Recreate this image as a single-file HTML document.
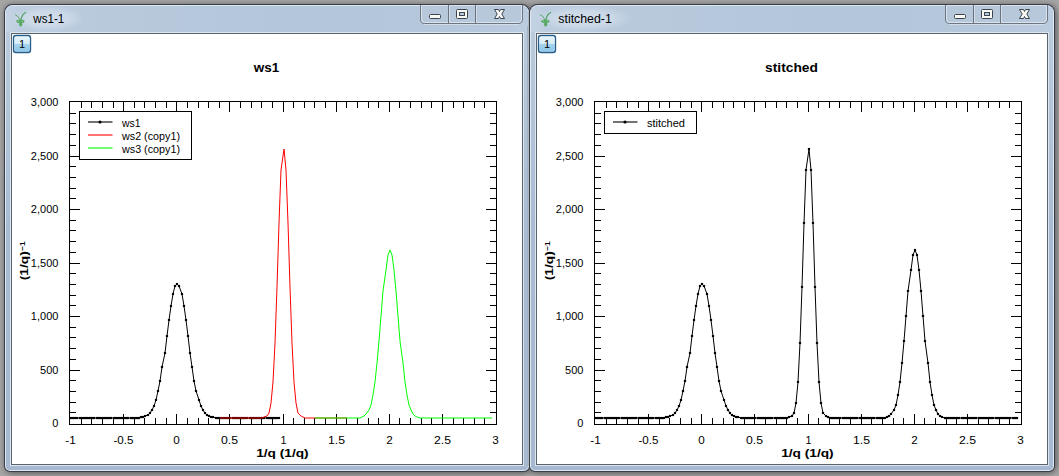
<!DOCTYPE html>
<html><head><meta charset="utf-8"><title>MantidPlot</title>
<style>html,body{margin:0;padding:0;width:1059px;height:476px;overflow:hidden;background:#a6a6a6}svg{display:block}</style>
</head><body><svg width="1059" height="476" viewBox="0 0 1059 476"><defs>
<linearGradient id="frameGrad" x1="0" y1="0" x2="0" y2="1">
<stop offset="0" stop-color="#bccddf"/><stop offset="0.5" stop-color="#a9bbd2"/><stop offset="1" stop-color="#a6b9d0"/></linearGradient>
<linearGradient id="titleGrad" x1="0" y1="0" x2="1" y2="0">
<stop offset="0" stop-color="#c4d3e3"/><stop offset="0.03" stop-color="#bccde0"/><stop offset="0.2" stop-color="#b8c9dc"/><stop offset="0.6" stop-color="#b3c6da"/><stop offset="0.85" stop-color="#b5c7db"/><stop offset="1" stop-color="#bccce0"/></linearGradient>
<radialGradient id="glow" cx="0.5" cy="0.5" r="0.5"><stop offset="0" stop-color="#dde7f1" stop-opacity="0.7"/><stop offset="0.55" stop-color="#dde7f1" stop-opacity="0.5"/><stop offset="1" stop-color="#dde7f1" stop-opacity="0"/></radialGradient>
<linearGradient id="btnGrad" x1="0" y1="0" x2="0" y2="1">
<stop offset="0" stop-color="#eaf6fc"/><stop offset="0.47" stop-color="#d6ecf8"/><stop offset="0.5" stop-color="#a4d3ee"/><stop offset="1" stop-color="#8ec5e8"/></linearGradient>
<clipPath id="clip0"><rect x="70" y="102" width="426" height="322"/></clipPath>
<clipPath id="clip525"><rect x="595" y="102" width="426" height="322"/></clipPath>
<filter id="shadow" x="-5%" y="-5%" width="110%" height="110%"><feGaussianBlur stdDeviation="3"/></filter>
<linearGradient id="bgTop" x1="0" y1="0" x2="0" y2="1"><stop offset="0" stop-color="#a3a3a3"/><stop offset="1" stop-color="#808080"/></linearGradient>
</defs><rect x="0" y="0" width="1059" height="476" fill="#a6a6a6"/><g opacity="0.5" filter="url(#shadow)"><rect x="5" y="5" width="526" height="468" rx="7" fill="#000"/><rect x="530" y="5" width="526" height="468" rx="7" fill="#000"/></g><path d="M4 12.5 A8.5 8.5 0 0 1 12.5 4 H521.5 A8.5 8.5 0 0 1 530 12.5 V466 A6 6 0 0 1 524 472 H10 A6 6 0 0 1 4 466 Z" fill="#363e4a"/><path d="M5 12.5 A7.5 7.5 0 0 1 12.5 5 H521.5 A7.5 7.5 0 0 1 529 12.5 V466 A5 5 0 0 1 524 471 H10 A5 5 0 0 1 5 466 Z" fill="#dfe7f1"/><path d="M6 12.5 A6.5 6.5 0 0 1 12.5 6 H521.5 A6.5 6.5 0 0 1 528 12.5 V466 A4 4 0 0 1 524 470 H10 A4 4 0 0 1 6 466 Z" fill="url(#frameGrad)"/><path d="M6 32 V12.5 A6.5 6.5 0 0 1 12.5 6 H521.5 A6.5 6.5 0 0 1 528 12.5 V32 Z" fill="url(#titleGrad)"/><ellipse cx="47.5" cy="18.5" rx="37.5" ry="13" fill="url(#glow)"/><rect x="10" y="32" width="514" height="434" fill="#dde5ef"/><rect x="11" y="33" width="512" height="432" fill="#58636e"/><rect x="12" y="34" width="510" height="430" fill="#ffffff"/><g transform="translate(0,0)" stroke-linecap="round"><path d="M25.7 12.5 Q21.9 14.2 21.0 19.8" fill="none" stroke="#45a055" stroke-width="1.1"/><path d="M15.3 14.7 Q18.8 15.7 19.8 19.8" fill="none" stroke="#5aa866" stroke-width="0.95"/><ellipse cx="20.4" cy="21.3" rx="4.2" ry="1.9" fill="#5aa866"/><ellipse cx="20.7" cy="24.3" rx="1.6" ry="2.3" fill="#5aa966"/><circle cx="18.4" cy="21.2" r="0.75" fill="#93c99c"/><circle cx="22.4" cy="21.2" r="0.75" fill="#93c99c"/></g><text x="33.3" y="23" font-family='"Liberation Sans", sans-serif' font-size="12" fill="#000" textLength="31" lengthAdjust="spacingAndGlyphs">ws1-1</text><path d="M420.5 5 V19 Q420.5 23.5 424.5 23.5 H518 Q522.5 23.5 522.5 19 V5" fill="#b7c8db" stroke="#6c7680"/><path d="M421.5 5.5 V19 Q421.5 22.5 424.5 22.5 H518 Q521.5 22.5 521.5 19 V5.5 Z" fill="none" stroke="#e2eaf3" stroke-opacity="0.8"/><path d="M424 24.5 H519" stroke="#dfe7f0" stroke-opacity="0.7"/><rect x="448" y="5" width="1" height="18" fill="#6a747e"/><rect x="449" y="5" width="1" height="18" fill="#dde6ef" opacity="0.7"/><rect x="475" y="5" width="1" height="18" fill="#6a747e"/><rect x="476" y="5" width="1" height="18" fill="#dde6ef" opacity="0.7"/><rect x="429.5" y="14.5" width="11" height="4" rx="1" fill="#f8f8f4" stroke="#3c4450"/><rect x="456.5" y="9.5" width="11" height="9" rx="1" fill="#f8f8f4" stroke="#3c4450"/><rect x="459.5" y="12.5" width="5" height="3" fill="#b7c8db" stroke="#3c4450"/><path transform="translate(0,0)" d="M494.5 9.5 H498.5 L499.5 11.5 L500.5 9.5 H504.5 L501.8 14 L504.5 18.5 H500.5 L499.5 16.5 L498.5 18.5 H494.5 L497.2 14 Z" fill="#f7f7f3" stroke="#3c4450" stroke-linejoin="round"/><rect x="13.5" y="35.5" width="17" height="17" rx="2.5" fill="url(#btnGrad)" stroke="#265f8c" stroke-width="1.35"/><rect x="14.6" y="36.6" width="14.8" height="14.8" rx="1.5" fill="none" stroke="#ffffff" stroke-opacity="0.3" stroke-width="0.8"/><text x="22" y="48" font-family='"Liberation Sans", sans-serif' font-size="11" fill="#000" text-anchor="middle">1</text><text x="266.5" y="72" font-family='"Liberation Sans", sans-serif' font-size="13" font-weight="bold" fill="#000" text-anchor="middle" textLength="25.5" lengthAdjust="spacingAndGlyphs">ws1</text><path d="M81 102h1v6h-1zM81 418h1v6h-1zM91 102h1v6h-1zM91 418h1v6h-1zM102 102h1v6h-1zM102 418h1v6h-1zM113 102h1v6h-1zM113 418h1v6h-1zM123 102h1v10h-1zM123 414h1v10h-1zM134 102h1v6h-1zM134 418h1v6h-1zM144 102h1v6h-1zM144 418h1v6h-1zM155 102h1v6h-1zM155 418h1v6h-1zM166 102h1v6h-1zM166 418h1v6h-1zM176 102h1v10h-1zM176 414h1v10h-1zM187 102h1v6h-1zM187 418h1v6h-1zM198 102h1v6h-1zM198 418h1v6h-1zM208 102h1v6h-1zM208 418h1v6h-1zM219 102h1v6h-1zM219 418h1v6h-1zM229 102h1v10h-1zM229 414h1v10h-1zM240 102h1v6h-1zM240 418h1v6h-1zM251 102h1v6h-1zM251 418h1v6h-1zM261 102h1v6h-1zM261 418h1v6h-1zM272 102h1v6h-1zM272 418h1v6h-1zM283 102h1v10h-1zM283 414h1v10h-1zM293 102h1v6h-1zM293 418h1v6h-1zM304 102h1v6h-1zM304 418h1v6h-1zM314 102h1v6h-1zM314 418h1v6h-1zM325 102h1v6h-1zM325 418h1v6h-1zM336 102h1v10h-1zM336 414h1v10h-1zM346 102h1v6h-1zM346 418h1v6h-1zM357 102h1v6h-1zM357 418h1v6h-1zM368 102h1v6h-1zM368 418h1v6h-1zM378 102h1v6h-1zM378 418h1v6h-1zM389 102h1v10h-1zM389 414h1v10h-1zM399 102h1v6h-1zM399 418h1v6h-1zM410 102h1v6h-1zM410 418h1v6h-1zM421 102h1v6h-1zM421 418h1v6h-1zM431 102h1v6h-1zM431 418h1v6h-1zM442 102h1v10h-1zM442 414h1v10h-1zM453 102h1v6h-1zM453 418h1v6h-1zM463 102h1v6h-1zM463 418h1v6h-1zM474 102h1v6h-1zM474 418h1v6h-1zM484 102h1v6h-1zM484 418h1v6h-1zM70 412h6v1h-6zM490 412h6v1h-6zM70 402h6v1h-6zM490 402h6v1h-6zM70 391h6v1h-6zM490 391h6v1h-6zM70 380h6v1h-6zM490 380h6v1h-6zM70 370h10v1h-10zM486 370h10v1h-10zM70 359h6v1h-6zM490 359h6v1h-6zM70 348h6v1h-6zM490 348h6v1h-6zM70 337h6v1h-6zM490 337h6v1h-6zM70 327h6v1h-6zM490 327h6v1h-6zM70 316h10v1h-10zM486 316h10v1h-10zM70 305h6v1h-6zM490 305h6v1h-6zM70 295h6v1h-6zM490 295h6v1h-6zM70 284h6v1h-6zM490 284h6v1h-6zM70 273h6v1h-6zM490 273h6v1h-6zM70 263h10v1h-10zM486 263h10v1h-10zM70 252h6v1h-6zM490 252h6v1h-6zM70 241h6v1h-6zM490 241h6v1h-6zM70 230h6v1h-6zM490 230h6v1h-6zM70 220h6v1h-6zM490 220h6v1h-6zM70 209h10v1h-10zM486 209h10v1h-10zM70 198h6v1h-6zM490 198h6v1h-6zM70 188h6v1h-6zM490 188h6v1h-6zM70 177h6v1h-6zM490 177h6v1h-6zM70 166h6v1h-6zM490 166h6v1h-6zM70 156h10v1h-10zM486 156h10v1h-10zM70 145h6v1h-6zM490 145h6v1h-6zM70 134h6v1h-6zM490 134h6v1h-6zM70 123h6v1h-6zM490 123h6v1h-6zM70 113h6v1h-6zM490 113h6v1h-6z" fill="#000" shape-rendering="crispEdges"/><rect x="69.5" y="101.5" width="427" height="323" fill="none" stroke="#000" shape-rendering="crispEdges"/><g font-family='"Liberation Sans", sans-serif' font-size="11" fill="#000" text-anchor="middle"><text x="70.5" y="444" textLength="10.5" lengthAdjust="spacingAndGlyphs">-1</text><text x="123.5" y="444" textLength="20" lengthAdjust="spacingAndGlyphs">-0.5</text><text x="176.5" y="444" textLength="6.5" lengthAdjust="spacingAndGlyphs">0</text><text x="229.5" y="444" textLength="17" lengthAdjust="spacingAndGlyphs">0.5</text><text x="283.5" y="444" textLength="6" lengthAdjust="spacingAndGlyphs">1</text><text x="336.5" y="444" textLength="17" lengthAdjust="spacingAndGlyphs">1.5</text><text x="389.5" y="444" textLength="6.5" lengthAdjust="spacingAndGlyphs">2</text><text x="442.5" y="444" textLength="17" lengthAdjust="spacingAndGlyphs">2.5</text><text x="495.5" y="444" textLength="6.5" lengthAdjust="spacingAndGlyphs">3</text></g><g font-family='"Liberation Sans", sans-serif' font-size="11" fill="#000" text-anchor="end"><text x="58.4" y="426.8">0</text><text x="58.4" y="373.8">500</text><text x="58.4" y="319.8">1,000</text><text x="58.4" y="266.8">1,500</text><text x="58.4" y="212.8">2,000</text><text x="58.4" y="159.8">2,500</text><text x="58.4" y="105.8">3,000</text></g><text x="282.4" y="456.6" font-family='"Liberation Sans", sans-serif' font-size="11" font-weight="bold" fill="#000" text-anchor="middle" textLength="52.5" lengthAdjust="spacingAndGlyphs">1/q (1/q)</text><g transform="translate(28.1,280.2) rotate(-90)" font-family='"Liberation Sans", sans-serif' font-weight="bold" fill="#000"><text x="0" y="0" font-size="11" textLength="29" lengthAdjust="spacingAndGlyphs">(1/q)</text><text x="29.3" y="-3.2" font-size="7.5" textLength="9.5" lengthAdjust="spacingAndGlyphs">&#8722;1</text></g><g clip-path="url(#clip0)"><polyline points="71,418 73,418 75,418 77,418 80,418 82,418 84,418 86,418 88,418 90,418 92,418 94,418 97,418 99,418 101,418 103,418 105,418 107,418 109,418 111,418 114,418 116,418 118,418 120,418 122,418 124,418 126,418 128,418 131,418 133,418 135,418 137,418 139,418 141,417 143,417 145,416 148,415 150,413 152,410 154,406 156,400 158,391 160,381 162,367 165,353 167,336 169,320 171,306 173,294 175,286 177,284 179,286 182,294 184,306 186,320 188,336 190,353 192,367 194,381 196,391 199,400 201,406 203,410 205,413 207,415 209,416 211,417 213,417 216,418 218,418 220,418 222,418 224,418 226,418 228,418 230,418 233,418 235,418 237,418 239,418 241,418 243,418 245,418 247,418 250,418 252,418 254,418 256,418 258,418 260,418 262,418 264,418 267,418 269,418 271,418 273,418 275,418 277,418 279,418" fill="none" stroke="#000" stroke-width="1.0" stroke-linejoin="round" /><path d="M69.65 418a1.35 1.35 0 1 0 2.7 0a1.35 1.35 0 1 0 -2.7 0zM71.65 418a1.35 1.35 0 1 0 2.7 0a1.35 1.35 0 1 0 -2.7 0zM73.65 418a1.35 1.35 0 1 0 2.7 0a1.35 1.35 0 1 0 -2.7 0zM75.65 418a1.35 1.35 0 1 0 2.7 0a1.35 1.35 0 1 0 -2.7 0zM78.65 418a1.35 1.35 0 1 0 2.7 0a1.35 1.35 0 1 0 -2.7 0zM80.65 418a1.35 1.35 0 1 0 2.7 0a1.35 1.35 0 1 0 -2.7 0zM82.65 418a1.35 1.35 0 1 0 2.7 0a1.35 1.35 0 1 0 -2.7 0zM84.65 418a1.35 1.35 0 1 0 2.7 0a1.35 1.35 0 1 0 -2.7 0zM86.65 418a1.35 1.35 0 1 0 2.7 0a1.35 1.35 0 1 0 -2.7 0zM88.65 418a1.35 1.35 0 1 0 2.7 0a1.35 1.35 0 1 0 -2.7 0zM90.65 418a1.35 1.35 0 1 0 2.7 0a1.35 1.35 0 1 0 -2.7 0zM92.65 418a1.35 1.35 0 1 0 2.7 0a1.35 1.35 0 1 0 -2.7 0zM95.65 418a1.35 1.35 0 1 0 2.7 0a1.35 1.35 0 1 0 -2.7 0zM97.65 418a1.35 1.35 0 1 0 2.7 0a1.35 1.35 0 1 0 -2.7 0zM99.65 418a1.35 1.35 0 1 0 2.7 0a1.35 1.35 0 1 0 -2.7 0zM101.65 418a1.35 1.35 0 1 0 2.7 0a1.35 1.35 0 1 0 -2.7 0zM103.65 418a1.35 1.35 0 1 0 2.7 0a1.35 1.35 0 1 0 -2.7 0zM105.65 418a1.35 1.35 0 1 0 2.7 0a1.35 1.35 0 1 0 -2.7 0zM107.65 418a1.35 1.35 0 1 0 2.7 0a1.35 1.35 0 1 0 -2.7 0zM109.65 418a1.35 1.35 0 1 0 2.7 0a1.35 1.35 0 1 0 -2.7 0zM112.65 418a1.35 1.35 0 1 0 2.7 0a1.35 1.35 0 1 0 -2.7 0zM114.65 418a1.35 1.35 0 1 0 2.7 0a1.35 1.35 0 1 0 -2.7 0zM116.65 418a1.35 1.35 0 1 0 2.7 0a1.35 1.35 0 1 0 -2.7 0zM118.65 418a1.35 1.35 0 1 0 2.7 0a1.35 1.35 0 1 0 -2.7 0zM120.65 418a1.35 1.35 0 1 0 2.7 0a1.35 1.35 0 1 0 -2.7 0zM122.65 418a1.35 1.35 0 1 0 2.7 0a1.35 1.35 0 1 0 -2.7 0zM124.65 418a1.35 1.35 0 1 0 2.7 0a1.35 1.35 0 1 0 -2.7 0zM126.65 418a1.35 1.35 0 1 0 2.7 0a1.35 1.35 0 1 0 -2.7 0zM129.65 418a1.35 1.35 0 1 0 2.7 0a1.35 1.35 0 1 0 -2.7 0zM131.65 418a1.35 1.35 0 1 0 2.7 0a1.35 1.35 0 1 0 -2.7 0zM133.65 418a1.35 1.35 0 1 0 2.7 0a1.35 1.35 0 1 0 -2.7 0zM135.65 418a1.35 1.35 0 1 0 2.7 0a1.35 1.35 0 1 0 -2.7 0zM137.65 418a1.35 1.35 0 1 0 2.7 0a1.35 1.35 0 1 0 -2.7 0zM139.65 417a1.35 1.35 0 1 0 2.7 0a1.35 1.35 0 1 0 -2.7 0zM141.65 417a1.35 1.35 0 1 0 2.7 0a1.35 1.35 0 1 0 -2.7 0zM143.65 416a1.35 1.35 0 1 0 2.7 0a1.35 1.35 0 1 0 -2.7 0zM146.65 415a1.35 1.35 0 1 0 2.7 0a1.35 1.35 0 1 0 -2.7 0zM148.65 413a1.35 1.35 0 1 0 2.7 0a1.35 1.35 0 1 0 -2.7 0zM150.65 410a1.35 1.35 0 1 0 2.7 0a1.35 1.35 0 1 0 -2.7 0zM152.65 406a1.35 1.35 0 1 0 2.7 0a1.35 1.35 0 1 0 -2.7 0zM154.65 400a1.35 1.35 0 1 0 2.7 0a1.35 1.35 0 1 0 -2.7 0zM156.65 391a1.35 1.35 0 1 0 2.7 0a1.35 1.35 0 1 0 -2.7 0zM158.65 381a1.35 1.35 0 1 0 2.7 0a1.35 1.35 0 1 0 -2.7 0zM160.65 367a1.35 1.35 0 1 0 2.7 0a1.35 1.35 0 1 0 -2.7 0zM163.65 353a1.35 1.35 0 1 0 2.7 0a1.35 1.35 0 1 0 -2.7 0zM165.65 336a1.35 1.35 0 1 0 2.7 0a1.35 1.35 0 1 0 -2.7 0zM167.65 320a1.35 1.35 0 1 0 2.7 0a1.35 1.35 0 1 0 -2.7 0zM169.65 306a1.35 1.35 0 1 0 2.7 0a1.35 1.35 0 1 0 -2.7 0zM171.65 294a1.35 1.35 0 1 0 2.7 0a1.35 1.35 0 1 0 -2.7 0zM173.65 286a1.35 1.35 0 1 0 2.7 0a1.35 1.35 0 1 0 -2.7 0zM175.65 284a1.35 1.35 0 1 0 2.7 0a1.35 1.35 0 1 0 -2.7 0zM177.65 286a1.35 1.35 0 1 0 2.7 0a1.35 1.35 0 1 0 -2.7 0zM180.65 294a1.35 1.35 0 1 0 2.7 0a1.35 1.35 0 1 0 -2.7 0zM182.65 306a1.35 1.35 0 1 0 2.7 0a1.35 1.35 0 1 0 -2.7 0zM184.65 320a1.35 1.35 0 1 0 2.7 0a1.35 1.35 0 1 0 -2.7 0zM186.65 336a1.35 1.35 0 1 0 2.7 0a1.35 1.35 0 1 0 -2.7 0zM188.65 353a1.35 1.35 0 1 0 2.7 0a1.35 1.35 0 1 0 -2.7 0zM190.65 367a1.35 1.35 0 1 0 2.7 0a1.35 1.35 0 1 0 -2.7 0zM192.65 381a1.35 1.35 0 1 0 2.7 0a1.35 1.35 0 1 0 -2.7 0zM194.65 391a1.35 1.35 0 1 0 2.7 0a1.35 1.35 0 1 0 -2.7 0zM197.65 400a1.35 1.35 0 1 0 2.7 0a1.35 1.35 0 1 0 -2.7 0zM199.65 406a1.35 1.35 0 1 0 2.7 0a1.35 1.35 0 1 0 -2.7 0zM201.65 410a1.35 1.35 0 1 0 2.7 0a1.35 1.35 0 1 0 -2.7 0zM203.65 413a1.35 1.35 0 1 0 2.7 0a1.35 1.35 0 1 0 -2.7 0zM205.65 415a1.35 1.35 0 1 0 2.7 0a1.35 1.35 0 1 0 -2.7 0zM207.65 416a1.35 1.35 0 1 0 2.7 0a1.35 1.35 0 1 0 -2.7 0zM209.65 417a1.35 1.35 0 1 0 2.7 0a1.35 1.35 0 1 0 -2.7 0zM211.65 417a1.35 1.35 0 1 0 2.7 0a1.35 1.35 0 1 0 -2.7 0zM214.65 418a1.35 1.35 0 1 0 2.7 0a1.35 1.35 0 1 0 -2.7 0zM216.65 418a1.35 1.35 0 1 0 2.7 0a1.35 1.35 0 1 0 -2.7 0zM218.65 418a1.35 1.35 0 1 0 2.7 0a1.35 1.35 0 1 0 -2.7 0zM220.65 418a1.35 1.35 0 1 0 2.7 0a1.35 1.35 0 1 0 -2.7 0zM222.65 418a1.35 1.35 0 1 0 2.7 0a1.35 1.35 0 1 0 -2.7 0zM224.65 418a1.35 1.35 0 1 0 2.7 0a1.35 1.35 0 1 0 -2.7 0zM226.65 418a1.35 1.35 0 1 0 2.7 0a1.35 1.35 0 1 0 -2.7 0zM228.65 418a1.35 1.35 0 1 0 2.7 0a1.35 1.35 0 1 0 -2.7 0zM231.65 418a1.35 1.35 0 1 0 2.7 0a1.35 1.35 0 1 0 -2.7 0zM233.65 418a1.35 1.35 0 1 0 2.7 0a1.35 1.35 0 1 0 -2.7 0zM235.65 418a1.35 1.35 0 1 0 2.7 0a1.35 1.35 0 1 0 -2.7 0zM237.65 418a1.35 1.35 0 1 0 2.7 0a1.35 1.35 0 1 0 -2.7 0zM239.65 418a1.35 1.35 0 1 0 2.7 0a1.35 1.35 0 1 0 -2.7 0zM241.65 418a1.35 1.35 0 1 0 2.7 0a1.35 1.35 0 1 0 -2.7 0zM243.65 418a1.35 1.35 0 1 0 2.7 0a1.35 1.35 0 1 0 -2.7 0zM245.65 418a1.35 1.35 0 1 0 2.7 0a1.35 1.35 0 1 0 -2.7 0zM248.65 418a1.35 1.35 0 1 0 2.7 0a1.35 1.35 0 1 0 -2.7 0zM250.65 418a1.35 1.35 0 1 0 2.7 0a1.35 1.35 0 1 0 -2.7 0zM252.65 418a1.35 1.35 0 1 0 2.7 0a1.35 1.35 0 1 0 -2.7 0zM254.65 418a1.35 1.35 0 1 0 2.7 0a1.35 1.35 0 1 0 -2.7 0zM256.65 418a1.35 1.35 0 1 0 2.7 0a1.35 1.35 0 1 0 -2.7 0zM258.65 418a1.35 1.35 0 1 0 2.7 0a1.35 1.35 0 1 0 -2.7 0zM260.65 418a1.35 1.35 0 1 0 2.7 0a1.35 1.35 0 1 0 -2.7 0zM262.65 418a1.35 1.35 0 1 0 2.7 0a1.35 1.35 0 1 0 -2.7 0zM265.65 418a1.35 1.35 0 1 0 2.7 0a1.35 1.35 0 1 0 -2.7 0zM267.65 418a1.35 1.35 0 1 0 2.7 0a1.35 1.35 0 1 0 -2.7 0zM269.65 418a1.35 1.35 0 1 0 2.7 0a1.35 1.35 0 1 0 -2.7 0zM271.65 418a1.35 1.35 0 1 0 2.7 0a1.35 1.35 0 1 0 -2.7 0zM273.65 418a1.35 1.35 0 1 0 2.7 0a1.35 1.35 0 1 0 -2.7 0zM275.65 418a1.35 1.35 0 1 0 2.7 0a1.35 1.35 0 1 0 -2.7 0zM277.65 418a1.35 1.35 0 1 0 2.7 0a1.35 1.35 0 1 0 -2.7 0z" fill="#000" opacity="0.55"/><path d="M70 417h2v2h-2zM72 417h2v2h-2zM74 417h2v2h-2zM76 417h2v2h-2zM79 417h2v2h-2zM81 417h2v2h-2zM83 417h2v2h-2zM85 417h2v2h-2zM87 417h2v2h-2zM89 417h2v2h-2zM91 417h2v2h-2zM93 417h2v2h-2zM96 417h2v2h-2zM98 417h2v2h-2zM100 417h2v2h-2zM102 417h2v2h-2zM104 417h2v2h-2zM106 417h2v2h-2zM108 417h2v2h-2zM110 417h2v2h-2zM113 417h2v2h-2zM115 417h2v2h-2zM117 417h2v2h-2zM119 417h2v2h-2zM121 417h2v2h-2zM123 417h2v2h-2zM125 417h2v2h-2zM127 417h2v2h-2zM130 417h2v2h-2zM132 417h2v2h-2zM134 417h2v2h-2zM136 417h2v2h-2zM138 417h2v2h-2zM140 416h2v2h-2zM142 416h2v2h-2zM144 415h2v2h-2zM147 414h2v2h-2zM149 412h2v2h-2zM151 409h2v2h-2zM153 405h2v2h-2zM155 399h2v2h-2zM157 390h2v2h-2zM159 380h2v2h-2zM161 366h2v2h-2zM164 352h2v2h-2zM166 335h2v2h-2zM168 319h2v2h-2zM170 305h2v2h-2zM172 293h2v2h-2zM174 285h2v2h-2zM176 283h2v2h-2zM178 285h2v2h-2zM181 293h2v2h-2zM183 305h2v2h-2zM185 319h2v2h-2zM187 335h2v2h-2zM189 352h2v2h-2zM191 366h2v2h-2zM193 380h2v2h-2zM195 390h2v2h-2zM198 399h2v2h-2zM200 405h2v2h-2zM202 409h2v2h-2zM204 412h2v2h-2zM206 414h2v2h-2zM208 415h2v2h-2zM210 416h2v2h-2zM212 416h2v2h-2zM215 417h2v2h-2zM217 417h2v2h-2zM219 417h2v2h-2zM221 417h2v2h-2zM223 417h2v2h-2zM225 417h2v2h-2zM227 417h2v2h-2zM229 417h2v2h-2zM232 417h2v2h-2zM234 417h2v2h-2zM236 417h2v2h-2zM238 417h2v2h-2zM240 417h2v2h-2zM242 417h2v2h-2zM244 417h2v2h-2zM246 417h2v2h-2zM249 417h2v2h-2zM251 417h2v2h-2zM253 417h2v2h-2zM255 417h2v2h-2zM257 417h2v2h-2zM259 417h2v2h-2zM261 417h2v2h-2zM263 417h2v2h-2zM266 417h2v2h-2zM268 417h2v2h-2zM270 417h2v2h-2zM272 417h2v2h-2zM274 417h2v2h-2zM276 417h2v2h-2zM278 417h2v2h-2z" fill="#000" shape-rendering="crispEdges"/><polyline points="220,418 222,418 224,418 226,418 228,418 230,418 233,418 235,418 237,418 239,418 241,418 243,418 245,418 247,418 250,418 252,418 254,418 256,418 258,418 260,418 262,418 264,417 267,416 269,413 271,403 273,382 275,343 277,287 279,223 281,170 284,149 286,170 288,223 290,287 292,343 294,382 296,403 298,413 301,416 303,417 305,418 307,418 309,418 311,418 313,418 315,418 318,418 320,418 322,418 324,418 326,418 328,418 330,418 332,418 335,418 337,418 339,418 341,418 343,418 345,418 347,418" fill="none" stroke="#ff0000" stroke-width="1.0" stroke-linejoin="round" /><polyline points="315,418 318,418 320,418 322,418 324,418 326,418 328,418 330,418 332,418 335,418 337,418 339,418 341,418 343,418 345,418 347,418 349,418 352,418 354,418 356,418 358,418 360,418 362,417 364,416 366,414 369,410 371,405 373,395 375,382 377,363 379,341 381,316 383,291 386,270 388,255 390,250 392,255 394,270 396,291 398,316 400,341 403,363 405,382 407,395 409,405 411,410 413,414 415,416 417,417 420,418 422,418 424,418 426,418 428,418 430,418 432,418 434,418 437,418 439,418 441,418 443,418 445,418 447,418 449,418 451,418 454,418 456,418 458,418 460,418 462,418 464,418 466,418 468,418 471,418 473,418 475,418 477,418 479,418 481,418 483,418 485,418 488,418 490,418 492,418" fill="none" stroke="#00ff00" stroke-width="1.0" stroke-linejoin="round" /></g><rect x="79.5" y="111.5" width="112" height="48" fill="#fff" stroke="#000" shape-rendering="crispEdges"/><rect x="88" y="121.0" width="24.5" height="2" fill="#000" opacity="0.55"/><circle cx="100" cy="122.0" r="1.6" fill="#000"/><text x="122" y="126.8" font-family='"Liberation Sans", sans-serif' font-size="11" fill="#000" textLength="18.5" lengthAdjust="spacingAndGlyphs">ws1</text><rect x="88" y="134.0" width="24.5" height="2" fill="#ff0000" opacity="0.55"/><text x="122" y="139.8" font-family='"Liberation Sans", sans-serif' font-size="11" fill="#000" textLength="58" lengthAdjust="spacingAndGlyphs">ws2 (copy1)</text><rect x="88" y="147.0" width="24.5" height="2" fill="#00ff00" opacity="0.55"/><text x="122" y="152.8" font-family='"Liberation Sans", sans-serif' font-size="11" fill="#000" textLength="58" lengthAdjust="spacingAndGlyphs">ws3 (copy1)</text><rect x="527" y="26" width="1" height="440" fill="#a4b4c7"/><rect x="528" y="12" width="1" height="454" fill="#b0b8c2"/><path d="M529 12.5 A8.5 8.5 0 0 1 537.5 4 H1046.5 A8.5 8.5 0 0 1 1055 12.5 V466 A6 6 0 0 1 1049 472 H535 A6 6 0 0 1 529 466 Z" fill="#363e4a"/><path d="M530 12.5 A7.5 7.5 0 0 1 537.5 5 H1046.5 A7.5 7.5 0 0 1 1054 12.5 V466 A5 5 0 0 1 1049 471 H535 A5 5 0 0 1 530 466 Z" fill="#dfe7f1"/><path d="M531 12.5 A6.5 6.5 0 0 1 537.5 6 H1046.5 A6.5 6.5 0 0 1 1053 12.5 V466 A4 4 0 0 1 1049 470 H535 A4 4 0 0 1 531 466 Z" fill="url(#frameGrad)"/><path d="M531 32 V12.5 A6.5 6.5 0 0 1 537.5 6 H1046.5 A6.5 6.5 0 0 1 1053 12.5 V32 Z" fill="url(#titleGrad)"/><ellipse cx="583.75" cy="18.5" rx="48.75" ry="13" fill="url(#glow)"/><rect x="535" y="32" width="514" height="434" fill="#dde5ef"/><rect x="536" y="33" width="512" height="432" fill="#58636e"/><rect x="537" y="34" width="510" height="430" fill="#ffffff"/><g transform="translate(525,0)" stroke-linecap="round"><path d="M25.7 12.5 Q21.9 14.2 21.0 19.8" fill="none" stroke="#45a055" stroke-width="1.1"/><path d="M15.3 14.7 Q18.8 15.7 19.8 19.8" fill="none" stroke="#5aa866" stroke-width="0.95"/><ellipse cx="20.4" cy="21.3" rx="4.2" ry="1.9" fill="#5aa866"/><ellipse cx="20.7" cy="24.3" rx="1.6" ry="2.3" fill="#5aa966"/><circle cx="18.4" cy="21.2" r="0.75" fill="#93c99c"/><circle cx="22.4" cy="21.2" r="0.75" fill="#93c99c"/></g><text x="558.3" y="23" font-family='"Liberation Sans", sans-serif' font-size="12" fill="#000" textLength="53.5" lengthAdjust="spacingAndGlyphs">stitched-1</text><path d="M945.5 5 V19 Q945.5 23.5 949.5 23.5 H1043 Q1047.5 23.5 1047.5 19 V5" fill="#b7c8db" stroke="#6c7680"/><path d="M946.5 5.5 V19 Q946.5 22.5 949.5 22.5 H1043 Q1046.5 22.5 1046.5 19 V5.5 Z" fill="none" stroke="#e2eaf3" stroke-opacity="0.8"/><path d="M949 24.5 H1044" stroke="#dfe7f0" stroke-opacity="0.7"/><rect x="973" y="5" width="1" height="18" fill="#6a747e"/><rect x="974" y="5" width="1" height="18" fill="#dde6ef" opacity="0.7"/><rect x="1000" y="5" width="1" height="18" fill="#6a747e"/><rect x="1001" y="5" width="1" height="18" fill="#dde6ef" opacity="0.7"/><rect x="954.5" y="14.5" width="11" height="4" rx="1" fill="#f8f8f4" stroke="#3c4450"/><rect x="981.5" y="9.5" width="11" height="9" rx="1" fill="#f8f8f4" stroke="#3c4450"/><rect x="984.5" y="12.5" width="5" height="3" fill="#b7c8db" stroke="#3c4450"/><path transform="translate(525,0)" d="M494.5 9.5 H498.5 L499.5 11.5 L500.5 9.5 H504.5 L501.8 14 L504.5 18.5 H500.5 L499.5 16.5 L498.5 18.5 H494.5 L497.2 14 Z" fill="#f7f7f3" stroke="#3c4450" stroke-linejoin="round"/><rect x="538.5" y="35.5" width="17" height="17" rx="2.5" fill="url(#btnGrad)" stroke="#265f8c" stroke-width="1.35"/><rect x="539.6" y="36.6" width="14.8" height="14.8" rx="1.5" fill="none" stroke="#ffffff" stroke-opacity="0.3" stroke-width="0.8"/><text x="547" y="48" font-family='"Liberation Sans", sans-serif' font-size="11" fill="#000" text-anchor="middle">1</text><text x="791.5" y="72" font-family='"Liberation Sans", sans-serif' font-size="13" font-weight="bold" fill="#000" text-anchor="middle" textLength="52.8" lengthAdjust="spacingAndGlyphs">stitched</text><path d="M606 102h1v6h-1zM606 418h1v6h-1zM616 102h1v6h-1zM616 418h1v6h-1zM627 102h1v6h-1zM627 418h1v6h-1zM638 102h1v6h-1zM638 418h1v6h-1zM648 102h1v10h-1zM648 414h1v10h-1zM659 102h1v6h-1zM659 418h1v6h-1zM669 102h1v6h-1zM669 418h1v6h-1zM680 102h1v6h-1zM680 418h1v6h-1zM691 102h1v6h-1zM691 418h1v6h-1zM701 102h1v10h-1zM701 414h1v10h-1zM712 102h1v6h-1zM712 418h1v6h-1zM723 102h1v6h-1zM723 418h1v6h-1zM733 102h1v6h-1zM733 418h1v6h-1zM744 102h1v6h-1zM744 418h1v6h-1zM754 102h1v10h-1zM754 414h1v10h-1zM765 102h1v6h-1zM765 418h1v6h-1zM776 102h1v6h-1zM776 418h1v6h-1zM786 102h1v6h-1zM786 418h1v6h-1zM797 102h1v6h-1zM797 418h1v6h-1zM808 102h1v10h-1zM808 414h1v10h-1zM818 102h1v6h-1zM818 418h1v6h-1zM829 102h1v6h-1zM829 418h1v6h-1zM839 102h1v6h-1zM839 418h1v6h-1zM850 102h1v6h-1zM850 418h1v6h-1zM861 102h1v10h-1zM861 414h1v10h-1zM871 102h1v6h-1zM871 418h1v6h-1zM882 102h1v6h-1zM882 418h1v6h-1zM893 102h1v6h-1zM893 418h1v6h-1zM903 102h1v6h-1zM903 418h1v6h-1zM914 102h1v10h-1zM914 414h1v10h-1zM924 102h1v6h-1zM924 418h1v6h-1zM935 102h1v6h-1zM935 418h1v6h-1zM946 102h1v6h-1zM946 418h1v6h-1zM956 102h1v6h-1zM956 418h1v6h-1zM967 102h1v10h-1zM967 414h1v10h-1zM978 102h1v6h-1zM978 418h1v6h-1zM988 102h1v6h-1zM988 418h1v6h-1zM999 102h1v6h-1zM999 418h1v6h-1zM1009 102h1v6h-1zM1009 418h1v6h-1zM595 412h6v1h-6zM1015 412h6v1h-6zM595 402h6v1h-6zM1015 402h6v1h-6zM595 391h6v1h-6zM1015 391h6v1h-6zM595 380h6v1h-6zM1015 380h6v1h-6zM595 370h10v1h-10zM1011 370h10v1h-10zM595 359h6v1h-6zM1015 359h6v1h-6zM595 348h6v1h-6zM1015 348h6v1h-6zM595 337h6v1h-6zM1015 337h6v1h-6zM595 327h6v1h-6zM1015 327h6v1h-6zM595 316h10v1h-10zM1011 316h10v1h-10zM595 305h6v1h-6zM1015 305h6v1h-6zM595 295h6v1h-6zM1015 295h6v1h-6zM595 284h6v1h-6zM1015 284h6v1h-6zM595 273h6v1h-6zM1015 273h6v1h-6zM595 263h10v1h-10zM1011 263h10v1h-10zM595 252h6v1h-6zM1015 252h6v1h-6zM595 241h6v1h-6zM1015 241h6v1h-6zM595 230h6v1h-6zM1015 230h6v1h-6zM595 220h6v1h-6zM1015 220h6v1h-6zM595 209h10v1h-10zM1011 209h10v1h-10zM595 198h6v1h-6zM1015 198h6v1h-6zM595 188h6v1h-6zM1015 188h6v1h-6zM595 177h6v1h-6zM1015 177h6v1h-6zM595 166h6v1h-6zM1015 166h6v1h-6zM595 156h10v1h-10zM1011 156h10v1h-10zM595 145h6v1h-6zM1015 145h6v1h-6zM595 134h6v1h-6zM1015 134h6v1h-6zM595 123h6v1h-6zM1015 123h6v1h-6zM595 113h6v1h-6zM1015 113h6v1h-6z" fill="#000" shape-rendering="crispEdges"/><rect x="594.5" y="101.5" width="427" height="323" fill="none" stroke="#000" shape-rendering="crispEdges"/><g font-family='"Liberation Sans", sans-serif' font-size="11" fill="#000" text-anchor="middle"><text x="595.5" y="444" textLength="10.5" lengthAdjust="spacingAndGlyphs">-1</text><text x="648.5" y="444" textLength="20" lengthAdjust="spacingAndGlyphs">-0.5</text><text x="701.5" y="444" textLength="6.5" lengthAdjust="spacingAndGlyphs">0</text><text x="754.5" y="444" textLength="17" lengthAdjust="spacingAndGlyphs">0.5</text><text x="808.5" y="444" textLength="6" lengthAdjust="spacingAndGlyphs">1</text><text x="861.5" y="444" textLength="17" lengthAdjust="spacingAndGlyphs">1.5</text><text x="914.5" y="444" textLength="6.5" lengthAdjust="spacingAndGlyphs">2</text><text x="967.5" y="444" textLength="17" lengthAdjust="spacingAndGlyphs">2.5</text><text x="1020.5" y="444" textLength="6.5" lengthAdjust="spacingAndGlyphs">3</text></g><g font-family='"Liberation Sans", sans-serif' font-size="11" fill="#000" text-anchor="end"><text x="583.4" y="426.8">0</text><text x="583.4" y="373.8">500</text><text x="583.4" y="319.8">1,000</text><text x="583.4" y="266.8">1,500</text><text x="583.4" y="212.8">2,000</text><text x="583.4" y="159.8">2,500</text><text x="583.4" y="105.8">3,000</text></g><text x="807.4" y="456.6" font-family='"Liberation Sans", sans-serif' font-size="11" font-weight="bold" fill="#000" text-anchor="middle" textLength="52.5" lengthAdjust="spacingAndGlyphs">1/q (1/q)</text><g transform="translate(553.1,280.2) rotate(-90)" font-family='"Liberation Sans", sans-serif' font-weight="bold" fill="#000"><text x="0" y="0" font-size="11" textLength="29" lengthAdjust="spacingAndGlyphs">(1/q)</text><text x="29.3" y="-3.2" font-size="7.5" textLength="9.5" lengthAdjust="spacingAndGlyphs">&#8722;1</text></g><g clip-path="url(#clip525)"><polyline points="596,418 598,418 600,418 602,418 605,418 607,418 609,418 611,418 613,418 615,418 617,418 619,418 622,418 624,418 626,418 628,418 630,418 632,418 634,418 636,418 639,418 641,418 643,418 645,418 647,418 649,418 651,418 653,418 656,418 658,418 660,418 662,418 664,418 666,417 668,417 670,416 673,415 675,413 677,410 679,406 681,400 683,391 685,381 687,367 690,353 692,336 694,320 696,306 698,294 700,286 702,284 704,286 707,294 709,306 711,320 713,336 715,353 717,367 719,381 721,391 724,400 726,406 728,410 730,413 732,415 734,416 736,417 738,417 741,418 743,418 745,418 747,418 749,418 751,418 753,418 755,418 758,418 760,418 762,418 764,418 766,418 768,418 770,418 772,418 775,418 777,418 779,418 781,418 783,418 785,418 787,418 789,417 792,416 794,413 796,403 798,382 800,343 802,287 804,223 806,170 809,149 811,170 813,223 815,287 817,343 819,382 821,403 823,413 826,416 828,417 830,418 832,418 834,418 836,418 838,418 840,418 843,418 845,418 847,418 849,418 851,418 853,418 855,418 857,418 860,418 862,418 864,418 866,418 868,418 870,418 872,418 874,418 877,418 879,418 881,418 883,418 885,418 887,417 889,416 891,414 894,410 896,405 898,395 900,382 902,363 904,341 906,316 908,291 911,270 913,255 915,250 917,255 919,270 921,291 923,316 925,341 928,363 930,382 932,395 934,405 936,410 938,414 940,416 942,417 945,418 947,418 949,418 951,418 953,418 955,418 957,418 959,418 962,418 964,418 966,418 968,418 970,418 972,418 974,418 976,418 979,418 981,418 983,418 985,418 987,418 989,418 991,418 993,418 996,418 998,418 1000,418 1002,418 1004,418 1006,418 1008,418 1010,418 1013,418 1015,418 1017,418" fill="none" stroke="#000" stroke-width="1.0" stroke-linejoin="round" /><path d="M594.65 418a1.35 1.35 0 1 0 2.7 0a1.35 1.35 0 1 0 -2.7 0zM596.65 418a1.35 1.35 0 1 0 2.7 0a1.35 1.35 0 1 0 -2.7 0zM598.65 418a1.35 1.35 0 1 0 2.7 0a1.35 1.35 0 1 0 -2.7 0zM600.65 418a1.35 1.35 0 1 0 2.7 0a1.35 1.35 0 1 0 -2.7 0zM603.65 418a1.35 1.35 0 1 0 2.7 0a1.35 1.35 0 1 0 -2.7 0zM605.65 418a1.35 1.35 0 1 0 2.7 0a1.35 1.35 0 1 0 -2.7 0zM607.65 418a1.35 1.35 0 1 0 2.7 0a1.35 1.35 0 1 0 -2.7 0zM609.65 418a1.35 1.35 0 1 0 2.7 0a1.35 1.35 0 1 0 -2.7 0zM611.65 418a1.35 1.35 0 1 0 2.7 0a1.35 1.35 0 1 0 -2.7 0zM613.65 418a1.35 1.35 0 1 0 2.7 0a1.35 1.35 0 1 0 -2.7 0zM615.65 418a1.35 1.35 0 1 0 2.7 0a1.35 1.35 0 1 0 -2.7 0zM617.65 418a1.35 1.35 0 1 0 2.7 0a1.35 1.35 0 1 0 -2.7 0zM620.65 418a1.35 1.35 0 1 0 2.7 0a1.35 1.35 0 1 0 -2.7 0zM622.65 418a1.35 1.35 0 1 0 2.7 0a1.35 1.35 0 1 0 -2.7 0zM624.65 418a1.35 1.35 0 1 0 2.7 0a1.35 1.35 0 1 0 -2.7 0zM626.65 418a1.35 1.35 0 1 0 2.7 0a1.35 1.35 0 1 0 -2.7 0zM628.65 418a1.35 1.35 0 1 0 2.7 0a1.35 1.35 0 1 0 -2.7 0zM630.65 418a1.35 1.35 0 1 0 2.7 0a1.35 1.35 0 1 0 -2.7 0zM632.65 418a1.35 1.35 0 1 0 2.7 0a1.35 1.35 0 1 0 -2.7 0zM634.65 418a1.35 1.35 0 1 0 2.7 0a1.35 1.35 0 1 0 -2.7 0zM637.65 418a1.35 1.35 0 1 0 2.7 0a1.35 1.35 0 1 0 -2.7 0zM639.65 418a1.35 1.35 0 1 0 2.7 0a1.35 1.35 0 1 0 -2.7 0zM641.65 418a1.35 1.35 0 1 0 2.7 0a1.35 1.35 0 1 0 -2.7 0zM643.65 418a1.35 1.35 0 1 0 2.7 0a1.35 1.35 0 1 0 -2.7 0zM645.65 418a1.35 1.35 0 1 0 2.7 0a1.35 1.35 0 1 0 -2.7 0zM647.65 418a1.35 1.35 0 1 0 2.7 0a1.35 1.35 0 1 0 -2.7 0zM649.65 418a1.35 1.35 0 1 0 2.7 0a1.35 1.35 0 1 0 -2.7 0zM651.65 418a1.35 1.35 0 1 0 2.7 0a1.35 1.35 0 1 0 -2.7 0zM654.65 418a1.35 1.35 0 1 0 2.7 0a1.35 1.35 0 1 0 -2.7 0zM656.65 418a1.35 1.35 0 1 0 2.7 0a1.35 1.35 0 1 0 -2.7 0zM658.65 418a1.35 1.35 0 1 0 2.7 0a1.35 1.35 0 1 0 -2.7 0zM660.65 418a1.35 1.35 0 1 0 2.7 0a1.35 1.35 0 1 0 -2.7 0zM662.65 418a1.35 1.35 0 1 0 2.7 0a1.35 1.35 0 1 0 -2.7 0zM664.65 417a1.35 1.35 0 1 0 2.7 0a1.35 1.35 0 1 0 -2.7 0zM666.65 417a1.35 1.35 0 1 0 2.7 0a1.35 1.35 0 1 0 -2.7 0zM668.65 416a1.35 1.35 0 1 0 2.7 0a1.35 1.35 0 1 0 -2.7 0zM671.65 415a1.35 1.35 0 1 0 2.7 0a1.35 1.35 0 1 0 -2.7 0zM673.65 413a1.35 1.35 0 1 0 2.7 0a1.35 1.35 0 1 0 -2.7 0zM675.65 410a1.35 1.35 0 1 0 2.7 0a1.35 1.35 0 1 0 -2.7 0zM677.65 406a1.35 1.35 0 1 0 2.7 0a1.35 1.35 0 1 0 -2.7 0zM679.65 400a1.35 1.35 0 1 0 2.7 0a1.35 1.35 0 1 0 -2.7 0zM681.65 391a1.35 1.35 0 1 0 2.7 0a1.35 1.35 0 1 0 -2.7 0zM683.65 381a1.35 1.35 0 1 0 2.7 0a1.35 1.35 0 1 0 -2.7 0zM685.65 367a1.35 1.35 0 1 0 2.7 0a1.35 1.35 0 1 0 -2.7 0zM688.65 353a1.35 1.35 0 1 0 2.7 0a1.35 1.35 0 1 0 -2.7 0zM690.65 336a1.35 1.35 0 1 0 2.7 0a1.35 1.35 0 1 0 -2.7 0zM692.65 320a1.35 1.35 0 1 0 2.7 0a1.35 1.35 0 1 0 -2.7 0zM694.65 306a1.35 1.35 0 1 0 2.7 0a1.35 1.35 0 1 0 -2.7 0zM696.65 294a1.35 1.35 0 1 0 2.7 0a1.35 1.35 0 1 0 -2.7 0zM698.65 286a1.35 1.35 0 1 0 2.7 0a1.35 1.35 0 1 0 -2.7 0zM700.65 284a1.35 1.35 0 1 0 2.7 0a1.35 1.35 0 1 0 -2.7 0zM702.65 286a1.35 1.35 0 1 0 2.7 0a1.35 1.35 0 1 0 -2.7 0zM705.65 294a1.35 1.35 0 1 0 2.7 0a1.35 1.35 0 1 0 -2.7 0zM707.65 306a1.35 1.35 0 1 0 2.7 0a1.35 1.35 0 1 0 -2.7 0zM709.65 320a1.35 1.35 0 1 0 2.7 0a1.35 1.35 0 1 0 -2.7 0zM711.65 336a1.35 1.35 0 1 0 2.7 0a1.35 1.35 0 1 0 -2.7 0zM713.65 353a1.35 1.35 0 1 0 2.7 0a1.35 1.35 0 1 0 -2.7 0zM715.65 367a1.35 1.35 0 1 0 2.7 0a1.35 1.35 0 1 0 -2.7 0zM717.65 381a1.35 1.35 0 1 0 2.7 0a1.35 1.35 0 1 0 -2.7 0zM719.65 391a1.35 1.35 0 1 0 2.7 0a1.35 1.35 0 1 0 -2.7 0zM722.65 400a1.35 1.35 0 1 0 2.7 0a1.35 1.35 0 1 0 -2.7 0zM724.65 406a1.35 1.35 0 1 0 2.7 0a1.35 1.35 0 1 0 -2.7 0zM726.65 410a1.35 1.35 0 1 0 2.7 0a1.35 1.35 0 1 0 -2.7 0zM728.65 413a1.35 1.35 0 1 0 2.7 0a1.35 1.35 0 1 0 -2.7 0zM730.65 415a1.35 1.35 0 1 0 2.7 0a1.35 1.35 0 1 0 -2.7 0zM732.65 416a1.35 1.35 0 1 0 2.7 0a1.35 1.35 0 1 0 -2.7 0zM734.65 417a1.35 1.35 0 1 0 2.7 0a1.35 1.35 0 1 0 -2.7 0zM736.65 417a1.35 1.35 0 1 0 2.7 0a1.35 1.35 0 1 0 -2.7 0zM739.65 418a1.35 1.35 0 1 0 2.7 0a1.35 1.35 0 1 0 -2.7 0zM741.65 418a1.35 1.35 0 1 0 2.7 0a1.35 1.35 0 1 0 -2.7 0zM743.65 418a1.35 1.35 0 1 0 2.7 0a1.35 1.35 0 1 0 -2.7 0zM745.65 418a1.35 1.35 0 1 0 2.7 0a1.35 1.35 0 1 0 -2.7 0zM747.65 418a1.35 1.35 0 1 0 2.7 0a1.35 1.35 0 1 0 -2.7 0zM749.65 418a1.35 1.35 0 1 0 2.7 0a1.35 1.35 0 1 0 -2.7 0zM751.65 418a1.35 1.35 0 1 0 2.7 0a1.35 1.35 0 1 0 -2.7 0zM753.65 418a1.35 1.35 0 1 0 2.7 0a1.35 1.35 0 1 0 -2.7 0zM756.65 418a1.35 1.35 0 1 0 2.7 0a1.35 1.35 0 1 0 -2.7 0zM758.65 418a1.35 1.35 0 1 0 2.7 0a1.35 1.35 0 1 0 -2.7 0zM760.65 418a1.35 1.35 0 1 0 2.7 0a1.35 1.35 0 1 0 -2.7 0zM762.65 418a1.35 1.35 0 1 0 2.7 0a1.35 1.35 0 1 0 -2.7 0zM764.65 418a1.35 1.35 0 1 0 2.7 0a1.35 1.35 0 1 0 -2.7 0zM766.65 418a1.35 1.35 0 1 0 2.7 0a1.35 1.35 0 1 0 -2.7 0zM768.65 418a1.35 1.35 0 1 0 2.7 0a1.35 1.35 0 1 0 -2.7 0zM770.65 418a1.35 1.35 0 1 0 2.7 0a1.35 1.35 0 1 0 -2.7 0zM773.65 418a1.35 1.35 0 1 0 2.7 0a1.35 1.35 0 1 0 -2.7 0zM775.65 418a1.35 1.35 0 1 0 2.7 0a1.35 1.35 0 1 0 -2.7 0zM777.65 418a1.35 1.35 0 1 0 2.7 0a1.35 1.35 0 1 0 -2.7 0zM779.65 418a1.35 1.35 0 1 0 2.7 0a1.35 1.35 0 1 0 -2.7 0zM781.65 418a1.35 1.35 0 1 0 2.7 0a1.35 1.35 0 1 0 -2.7 0zM783.65 418a1.35 1.35 0 1 0 2.7 0a1.35 1.35 0 1 0 -2.7 0zM785.65 418a1.35 1.35 0 1 0 2.7 0a1.35 1.35 0 1 0 -2.7 0zM787.65 417a1.35 1.35 0 1 0 2.7 0a1.35 1.35 0 1 0 -2.7 0zM790.65 416a1.35 1.35 0 1 0 2.7 0a1.35 1.35 0 1 0 -2.7 0zM792.65 413a1.35 1.35 0 1 0 2.7 0a1.35 1.35 0 1 0 -2.7 0zM794.65 403a1.35 1.35 0 1 0 2.7 0a1.35 1.35 0 1 0 -2.7 0zM796.65 382a1.35 1.35 0 1 0 2.7 0a1.35 1.35 0 1 0 -2.7 0zM798.65 343a1.35 1.35 0 1 0 2.7 0a1.35 1.35 0 1 0 -2.7 0zM800.65 287a1.35 1.35 0 1 0 2.7 0a1.35 1.35 0 1 0 -2.7 0zM802.65 223a1.35 1.35 0 1 0 2.7 0a1.35 1.35 0 1 0 -2.7 0zM804.65 170a1.35 1.35 0 1 0 2.7 0a1.35 1.35 0 1 0 -2.7 0zM807.65 149a1.35 1.35 0 1 0 2.7 0a1.35 1.35 0 1 0 -2.7 0zM809.65 170a1.35 1.35 0 1 0 2.7 0a1.35 1.35 0 1 0 -2.7 0zM811.65 223a1.35 1.35 0 1 0 2.7 0a1.35 1.35 0 1 0 -2.7 0zM813.65 287a1.35 1.35 0 1 0 2.7 0a1.35 1.35 0 1 0 -2.7 0zM815.65 343a1.35 1.35 0 1 0 2.7 0a1.35 1.35 0 1 0 -2.7 0zM817.65 382a1.35 1.35 0 1 0 2.7 0a1.35 1.35 0 1 0 -2.7 0zM819.65 403a1.35 1.35 0 1 0 2.7 0a1.35 1.35 0 1 0 -2.7 0zM821.65 413a1.35 1.35 0 1 0 2.7 0a1.35 1.35 0 1 0 -2.7 0zM824.65 416a1.35 1.35 0 1 0 2.7 0a1.35 1.35 0 1 0 -2.7 0zM826.65 417a1.35 1.35 0 1 0 2.7 0a1.35 1.35 0 1 0 -2.7 0zM828.65 418a1.35 1.35 0 1 0 2.7 0a1.35 1.35 0 1 0 -2.7 0zM830.65 418a1.35 1.35 0 1 0 2.7 0a1.35 1.35 0 1 0 -2.7 0zM832.65 418a1.35 1.35 0 1 0 2.7 0a1.35 1.35 0 1 0 -2.7 0zM834.65 418a1.35 1.35 0 1 0 2.7 0a1.35 1.35 0 1 0 -2.7 0zM836.65 418a1.35 1.35 0 1 0 2.7 0a1.35 1.35 0 1 0 -2.7 0zM838.65 418a1.35 1.35 0 1 0 2.7 0a1.35 1.35 0 1 0 -2.7 0zM841.65 418a1.35 1.35 0 1 0 2.7 0a1.35 1.35 0 1 0 -2.7 0zM843.65 418a1.35 1.35 0 1 0 2.7 0a1.35 1.35 0 1 0 -2.7 0zM845.65 418a1.35 1.35 0 1 0 2.7 0a1.35 1.35 0 1 0 -2.7 0zM847.65 418a1.35 1.35 0 1 0 2.7 0a1.35 1.35 0 1 0 -2.7 0zM849.65 418a1.35 1.35 0 1 0 2.7 0a1.35 1.35 0 1 0 -2.7 0zM851.65 418a1.35 1.35 0 1 0 2.7 0a1.35 1.35 0 1 0 -2.7 0zM853.65 418a1.35 1.35 0 1 0 2.7 0a1.35 1.35 0 1 0 -2.7 0zM855.65 418a1.35 1.35 0 1 0 2.7 0a1.35 1.35 0 1 0 -2.7 0zM858.65 418a1.35 1.35 0 1 0 2.7 0a1.35 1.35 0 1 0 -2.7 0zM860.65 418a1.35 1.35 0 1 0 2.7 0a1.35 1.35 0 1 0 -2.7 0zM862.65 418a1.35 1.35 0 1 0 2.7 0a1.35 1.35 0 1 0 -2.7 0zM864.65 418a1.35 1.35 0 1 0 2.7 0a1.35 1.35 0 1 0 -2.7 0zM866.65 418a1.35 1.35 0 1 0 2.7 0a1.35 1.35 0 1 0 -2.7 0zM868.65 418a1.35 1.35 0 1 0 2.7 0a1.35 1.35 0 1 0 -2.7 0zM870.65 418a1.35 1.35 0 1 0 2.7 0a1.35 1.35 0 1 0 -2.7 0zM872.65 418a1.35 1.35 0 1 0 2.7 0a1.35 1.35 0 1 0 -2.7 0zM875.65 418a1.35 1.35 0 1 0 2.7 0a1.35 1.35 0 1 0 -2.7 0zM877.65 418a1.35 1.35 0 1 0 2.7 0a1.35 1.35 0 1 0 -2.7 0zM879.65 418a1.35 1.35 0 1 0 2.7 0a1.35 1.35 0 1 0 -2.7 0zM881.65 418a1.35 1.35 0 1 0 2.7 0a1.35 1.35 0 1 0 -2.7 0zM883.65 418a1.35 1.35 0 1 0 2.7 0a1.35 1.35 0 1 0 -2.7 0zM885.65 417a1.35 1.35 0 1 0 2.7 0a1.35 1.35 0 1 0 -2.7 0zM887.65 416a1.35 1.35 0 1 0 2.7 0a1.35 1.35 0 1 0 -2.7 0zM889.65 414a1.35 1.35 0 1 0 2.7 0a1.35 1.35 0 1 0 -2.7 0zM892.65 410a1.35 1.35 0 1 0 2.7 0a1.35 1.35 0 1 0 -2.7 0zM894.65 405a1.35 1.35 0 1 0 2.7 0a1.35 1.35 0 1 0 -2.7 0zM896.65 395a1.35 1.35 0 1 0 2.7 0a1.35 1.35 0 1 0 -2.7 0zM898.65 382a1.35 1.35 0 1 0 2.7 0a1.35 1.35 0 1 0 -2.7 0zM900.65 363a1.35 1.35 0 1 0 2.7 0a1.35 1.35 0 1 0 -2.7 0zM902.65 341a1.35 1.35 0 1 0 2.7 0a1.35 1.35 0 1 0 -2.7 0zM904.65 316a1.35 1.35 0 1 0 2.7 0a1.35 1.35 0 1 0 -2.7 0zM906.65 291a1.35 1.35 0 1 0 2.7 0a1.35 1.35 0 1 0 -2.7 0zM909.65 270a1.35 1.35 0 1 0 2.7 0a1.35 1.35 0 1 0 -2.7 0zM911.65 255a1.35 1.35 0 1 0 2.7 0a1.35 1.35 0 1 0 -2.7 0zM913.65 250a1.35 1.35 0 1 0 2.7 0a1.35 1.35 0 1 0 -2.7 0zM915.65 255a1.35 1.35 0 1 0 2.7 0a1.35 1.35 0 1 0 -2.7 0zM917.65 270a1.35 1.35 0 1 0 2.7 0a1.35 1.35 0 1 0 -2.7 0zM919.65 291a1.35 1.35 0 1 0 2.7 0a1.35 1.35 0 1 0 -2.7 0zM921.65 316a1.35 1.35 0 1 0 2.7 0a1.35 1.35 0 1 0 -2.7 0zM923.65 341a1.35 1.35 0 1 0 2.7 0a1.35 1.35 0 1 0 -2.7 0zM926.65 363a1.35 1.35 0 1 0 2.7 0a1.35 1.35 0 1 0 -2.7 0zM928.65 382a1.35 1.35 0 1 0 2.7 0a1.35 1.35 0 1 0 -2.7 0zM930.65 395a1.35 1.35 0 1 0 2.7 0a1.35 1.35 0 1 0 -2.7 0zM932.65 405a1.35 1.35 0 1 0 2.7 0a1.35 1.35 0 1 0 -2.7 0zM934.65 410a1.35 1.35 0 1 0 2.7 0a1.35 1.35 0 1 0 -2.7 0zM936.65 414a1.35 1.35 0 1 0 2.7 0a1.35 1.35 0 1 0 -2.7 0zM938.65 416a1.35 1.35 0 1 0 2.7 0a1.35 1.35 0 1 0 -2.7 0zM940.65 417a1.35 1.35 0 1 0 2.7 0a1.35 1.35 0 1 0 -2.7 0zM943.65 418a1.35 1.35 0 1 0 2.7 0a1.35 1.35 0 1 0 -2.7 0zM945.65 418a1.35 1.35 0 1 0 2.7 0a1.35 1.35 0 1 0 -2.7 0zM947.65 418a1.35 1.35 0 1 0 2.7 0a1.35 1.35 0 1 0 -2.7 0zM949.65 418a1.35 1.35 0 1 0 2.7 0a1.35 1.35 0 1 0 -2.7 0zM951.65 418a1.35 1.35 0 1 0 2.7 0a1.35 1.35 0 1 0 -2.7 0zM953.65 418a1.35 1.35 0 1 0 2.7 0a1.35 1.35 0 1 0 -2.7 0zM955.65 418a1.35 1.35 0 1 0 2.7 0a1.35 1.35 0 1 0 -2.7 0zM957.65 418a1.35 1.35 0 1 0 2.7 0a1.35 1.35 0 1 0 -2.7 0zM960.65 418a1.35 1.35 0 1 0 2.7 0a1.35 1.35 0 1 0 -2.7 0zM962.65 418a1.35 1.35 0 1 0 2.7 0a1.35 1.35 0 1 0 -2.7 0zM964.65 418a1.35 1.35 0 1 0 2.7 0a1.35 1.35 0 1 0 -2.7 0zM966.65 418a1.35 1.35 0 1 0 2.7 0a1.35 1.35 0 1 0 -2.7 0zM968.65 418a1.35 1.35 0 1 0 2.7 0a1.35 1.35 0 1 0 -2.7 0zM970.65 418a1.35 1.35 0 1 0 2.7 0a1.35 1.35 0 1 0 -2.7 0zM972.65 418a1.35 1.35 0 1 0 2.7 0a1.35 1.35 0 1 0 -2.7 0zM974.65 418a1.35 1.35 0 1 0 2.7 0a1.35 1.35 0 1 0 -2.7 0zM977.65 418a1.35 1.35 0 1 0 2.7 0a1.35 1.35 0 1 0 -2.7 0zM979.65 418a1.35 1.35 0 1 0 2.7 0a1.35 1.35 0 1 0 -2.7 0zM981.65 418a1.35 1.35 0 1 0 2.7 0a1.35 1.35 0 1 0 -2.7 0zM983.65 418a1.35 1.35 0 1 0 2.7 0a1.35 1.35 0 1 0 -2.7 0zM985.65 418a1.35 1.35 0 1 0 2.7 0a1.35 1.35 0 1 0 -2.7 0zM987.65 418a1.35 1.35 0 1 0 2.7 0a1.35 1.35 0 1 0 -2.7 0zM989.65 418a1.35 1.35 0 1 0 2.7 0a1.35 1.35 0 1 0 -2.7 0zM991.65 418a1.35 1.35 0 1 0 2.7 0a1.35 1.35 0 1 0 -2.7 0zM994.65 418a1.35 1.35 0 1 0 2.7 0a1.35 1.35 0 1 0 -2.7 0zM996.65 418a1.35 1.35 0 1 0 2.7 0a1.35 1.35 0 1 0 -2.7 0zM998.65 418a1.35 1.35 0 1 0 2.7 0a1.35 1.35 0 1 0 -2.7 0zM1000.65 418a1.35 1.35 0 1 0 2.7 0a1.35 1.35 0 1 0 -2.7 0zM1002.65 418a1.35 1.35 0 1 0 2.7 0a1.35 1.35 0 1 0 -2.7 0zM1004.65 418a1.35 1.35 0 1 0 2.7 0a1.35 1.35 0 1 0 -2.7 0zM1006.65 418a1.35 1.35 0 1 0 2.7 0a1.35 1.35 0 1 0 -2.7 0zM1008.65 418a1.35 1.35 0 1 0 2.7 0a1.35 1.35 0 1 0 -2.7 0zM1011.65 418a1.35 1.35 0 1 0 2.7 0a1.35 1.35 0 1 0 -2.7 0zM1013.65 418a1.35 1.35 0 1 0 2.7 0a1.35 1.35 0 1 0 -2.7 0zM1015.65 418a1.35 1.35 0 1 0 2.7 0a1.35 1.35 0 1 0 -2.7 0z" fill="#000" opacity="0.55"/><path d="M595 417h2v2h-2zM597 417h2v2h-2zM599 417h2v2h-2zM601 417h2v2h-2zM604 417h2v2h-2zM606 417h2v2h-2zM608 417h2v2h-2zM610 417h2v2h-2zM612 417h2v2h-2zM614 417h2v2h-2zM616 417h2v2h-2zM618 417h2v2h-2zM621 417h2v2h-2zM623 417h2v2h-2zM625 417h2v2h-2zM627 417h2v2h-2zM629 417h2v2h-2zM631 417h2v2h-2zM633 417h2v2h-2zM635 417h2v2h-2zM638 417h2v2h-2zM640 417h2v2h-2zM642 417h2v2h-2zM644 417h2v2h-2zM646 417h2v2h-2zM648 417h2v2h-2zM650 417h2v2h-2zM652 417h2v2h-2zM655 417h2v2h-2zM657 417h2v2h-2zM659 417h2v2h-2zM661 417h2v2h-2zM663 417h2v2h-2zM665 416h2v2h-2zM667 416h2v2h-2zM669 415h2v2h-2zM672 414h2v2h-2zM674 412h2v2h-2zM676 409h2v2h-2zM678 405h2v2h-2zM680 399h2v2h-2zM682 390h2v2h-2zM684 380h2v2h-2zM686 366h2v2h-2zM689 352h2v2h-2zM691 335h2v2h-2zM693 319h2v2h-2zM695 305h2v2h-2zM697 293h2v2h-2zM699 285h2v2h-2zM701 283h2v2h-2zM703 285h2v2h-2zM706 293h2v2h-2zM708 305h2v2h-2zM710 319h2v2h-2zM712 335h2v2h-2zM714 352h2v2h-2zM716 366h2v2h-2zM718 380h2v2h-2zM720 390h2v2h-2zM723 399h2v2h-2zM725 405h2v2h-2zM727 409h2v2h-2zM729 412h2v2h-2zM731 414h2v2h-2zM733 415h2v2h-2zM735 416h2v2h-2zM737 416h2v2h-2zM740 417h2v2h-2zM742 417h2v2h-2zM744 417h2v2h-2zM746 417h2v2h-2zM748 417h2v2h-2zM750 417h2v2h-2zM752 417h2v2h-2zM754 417h2v2h-2zM757 417h2v2h-2zM759 417h2v2h-2zM761 417h2v2h-2zM763 417h2v2h-2zM765 417h2v2h-2zM767 417h2v2h-2zM769 417h2v2h-2zM771 417h2v2h-2zM774 417h2v2h-2zM776 417h2v2h-2zM778 417h2v2h-2zM780 417h2v2h-2zM782 417h2v2h-2zM784 417h2v2h-2zM786 417h2v2h-2zM788 416h2v2h-2zM791 415h2v2h-2zM793 412h2v2h-2zM795 402h2v2h-2zM797 381h2v2h-2zM799 342h2v2h-2zM801 286h2v2h-2zM803 222h2v2h-2zM805 169h2v2h-2zM808 148h2v2h-2zM810 169h2v2h-2zM812 222h2v2h-2zM814 286h2v2h-2zM816 342h2v2h-2zM818 381h2v2h-2zM820 402h2v2h-2zM822 412h2v2h-2zM825 415h2v2h-2zM827 416h2v2h-2zM829 417h2v2h-2zM831 417h2v2h-2zM833 417h2v2h-2zM835 417h2v2h-2zM837 417h2v2h-2zM839 417h2v2h-2zM842 417h2v2h-2zM844 417h2v2h-2zM846 417h2v2h-2zM848 417h2v2h-2zM850 417h2v2h-2zM852 417h2v2h-2zM854 417h2v2h-2zM856 417h2v2h-2zM859 417h2v2h-2zM861 417h2v2h-2zM863 417h2v2h-2zM865 417h2v2h-2zM867 417h2v2h-2zM869 417h2v2h-2zM871 417h2v2h-2zM873 417h2v2h-2zM876 417h2v2h-2zM878 417h2v2h-2zM880 417h2v2h-2zM882 417h2v2h-2zM884 417h2v2h-2zM886 416h2v2h-2zM888 415h2v2h-2zM890 413h2v2h-2zM893 409h2v2h-2zM895 404h2v2h-2zM897 394h2v2h-2zM899 381h2v2h-2zM901 362h2v2h-2zM903 340h2v2h-2zM905 315h2v2h-2zM907 290h2v2h-2zM910 269h2v2h-2zM912 254h2v2h-2zM914 249h2v2h-2zM916 254h2v2h-2zM918 269h2v2h-2zM920 290h2v2h-2zM922 315h2v2h-2zM924 340h2v2h-2zM927 362h2v2h-2zM929 381h2v2h-2zM931 394h2v2h-2zM933 404h2v2h-2zM935 409h2v2h-2zM937 413h2v2h-2zM939 415h2v2h-2zM941 416h2v2h-2zM944 417h2v2h-2zM946 417h2v2h-2zM948 417h2v2h-2zM950 417h2v2h-2zM952 417h2v2h-2zM954 417h2v2h-2zM956 417h2v2h-2zM958 417h2v2h-2zM961 417h2v2h-2zM963 417h2v2h-2zM965 417h2v2h-2zM967 417h2v2h-2zM969 417h2v2h-2zM971 417h2v2h-2zM973 417h2v2h-2zM975 417h2v2h-2zM978 417h2v2h-2zM980 417h2v2h-2zM982 417h2v2h-2zM984 417h2v2h-2zM986 417h2v2h-2zM988 417h2v2h-2zM990 417h2v2h-2zM992 417h2v2h-2zM995 417h2v2h-2zM997 417h2v2h-2zM999 417h2v2h-2zM1001 417h2v2h-2zM1003 417h2v2h-2zM1005 417h2v2h-2zM1007 417h2v2h-2zM1009 417h2v2h-2zM1012 417h2v2h-2zM1014 417h2v2h-2zM1016 417h2v2h-2z" fill="#000" shape-rendering="crispEdges"/></g><rect x="604.5" y="111.5" width="92" height="22" fill="#fff" stroke="#000" shape-rendering="crispEdges"/><rect x="613" y="121.0" width="24.5" height="2" fill="#000" opacity="0.55"/><circle cx="625" cy="122.0" r="1.6" fill="#000"/><text x="647" y="126.8" font-family='"Liberation Sans", sans-serif' font-size="11" fill="#000" textLength="38" lengthAdjust="spacingAndGlyphs">stitched</text></svg></body></html>
